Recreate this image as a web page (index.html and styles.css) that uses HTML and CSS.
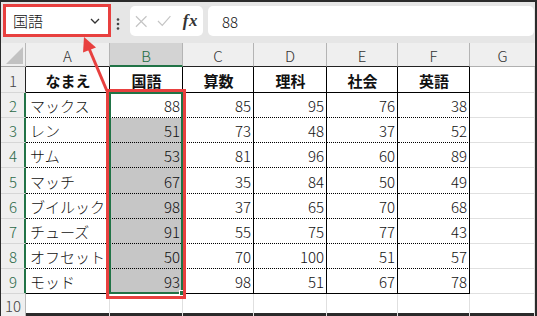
FILE: index.html
```html
<!DOCTYPE html>
<html lang="ja">
<head>
<meta charset="utf-8">
<link rel="stylesheet" href="styles.css">
</head>
<body>
<div class="frame">
  <div class="fbar">
    <div class="namebox">
      <span class="nb-text">国語</span>
      <svg class="chev" width="10" height="6" viewBox="0 0 10 6"><polyline points="1,1 5,5 9,1" fill="none" stroke="#333" stroke-width="1.3"/></svg>
    </div>
    <svg class="vdots" width="4" height="12" viewBox="0 0 4 12"><circle cx="2" cy="1.5" r="1.3" fill="#444"/><circle cx="2" cy="6" r="1.3" fill="#444"/><circle cx="2" cy="10.5" r="1.3" fill="#444"/></svg>
    <div class="fbtns">
      <svg width="13" height="13" viewBox="0 0 13 13"><path d="M1 1 L12 12 M12 1 L1 12" stroke="#c4c4c4" stroke-width="1.2" fill="none"/></svg>
      <svg width="15" height="12" viewBox="0 0 15 12"><polyline points="1,6 5.5,10.5 14,1" stroke="#c4c4c4" stroke-width="1.2" fill="none"/></svg>
      <span class="fx">fx</span>
    </div>
    <div class="finput">88</div>
  </div>
  <div class="grid">
    <div class="corner"><span class="tri"></span></div>
    <div class="ch">A</div><div class="ch chsel">B</div><div class="ch">C</div><div class="ch">D</div><div class="ch">E</div><div class="ch">F</div><div class="ch chg">G</div>

    <div class="rh rh1">1</div>
    <div class="c t top hd">なまえ</div><div class="c t top hd">国語</div><div class="c t top hd">算数</div><div class="c t top hd">理科</div><div class="c t top hd">社会</div><div class="c t top hd">英語</div><div class="c"></div>

    <div class="rh rs">2</div>
    <div class="c t dot nm">マックス</div><div class="c t dot num">88</div><div class="c t dot num">85</div><div class="c t dot num">95</div><div class="c t dot num">76</div><div class="c t dot num">38</div><div class="c"></div>

    <div class="rh rs">3</div>
    <div class="c t dot nm">レン</div><div class="c t dot num sel">51</div><div class="c t dot num">73</div><div class="c t dot num">48</div><div class="c t dot num">37</div><div class="c t dot num">52</div><div class="c"></div>

    <div class="rh rs">4</div>
    <div class="c t dot nm">サム</div><div class="c t dot num sel">53</div><div class="c t dot num">81</div><div class="c t dot num">96</div><div class="c t dot num">60</div><div class="c t dot num">89</div><div class="c"></div>

    <div class="rh rs">5</div>
    <div class="c t dot nm">マッチ</div><div class="c t dot num sel">67</div><div class="c t dot num">35</div><div class="c t dot num">84</div><div class="c t dot num">50</div><div class="c t dot num">49</div><div class="c"></div>

    <div class="rh rs">6</div>
    <div class="c t dot nm">ブイルック</div><div class="c t dot num sel">98</div><div class="c t dot num">37</div><div class="c t dot num">65</div><div class="c t dot num">70</div><div class="c t dot num">68</div><div class="c"></div>

    <div class="rh rs">7</div>
    <div class="c t dot nm">チューズ</div><div class="c t dot num sel">91</div><div class="c t dot num">55</div><div class="c t dot num">75</div><div class="c t dot num">77</div><div class="c t dot num">43</div><div class="c"></div>

    <div class="rh rs">8</div>
    <div class="c t dot nm">オフセット</div><div class="c t dot num sel">50</div><div class="c t dot num">70</div><div class="c t dot num">100</div><div class="c t dot num">51</div><div class="c t dot num">57</div><div class="c"></div>

    <div class="rh rs">9</div>
    <div class="c t top nm">モッド</div><div class="c t top num sel">93</div><div class="c t top num">98</div><div class="c t top num">51</div><div class="c t top num">67</div><div class="c t top num">78</div><div class="c"></div>

    <div class="rh rh10">10</div>
    <div class="c"></div><div class="c"></div><div class="c"></div><div class="c"></div><div class="c"></div><div class="c"></div><div class="c"></div>
  </div>
</div>

<div class="selbox"><span class="handle"></span></div>
<div class="mark mark-cells"></div>
<svg class="arrow" width="537" height="316" viewBox="0 0 537 316">
  <line x1="107" y1="91" x2="88" y2="46" stroke="#e8403f" stroke-width="3"/>
  <polygon points="84,37 96,47.5 83,52.5" fill="#e8403f"/>
</svg>
</body>
</html>
```

FILE: styles.css
```css
* { box-sizing: border-box; }
html, body { margin: 0; padding: 0; }
body {
  position: relative;
  width: 537px;
  height: 316px;
  font-family: "Noto Sans CJK JP", "Noto Sans", sans-serif;
  font-weight: 300;
  color: #111;
  overflow: hidden;
}
.frame {
  width: 537px;
  height: 316px;
  border-style: solid;
  border-color: #2b2b2b;
  border-width: 2px 2px 3px 1px;
  display: flex;
  flex-direction: column;
  background: #fff;
}
.fbar {
  height: 41px;
  background: #e6e6e6;
  display: flex;
  align-items: flex-start;
  padding: 2px 1px 0 2px;
  flex: none;
}
.namebox {
  width: 108px;
  height: 33px;
  border: 3px solid #e8403f;
  background: #fff;
  display: flex;
  align-items: center;
  justify-content: space-between;
  padding: 0 8px 0 7px;
}
.nb-text { font-size: 15px; line-height: 1; color: #111; }
.chev { margin-top: 1px; }
.vdots { margin: 14px 0 0 5px; }
.fbtns {
  margin: 2px 0 0 10px;
  width: 73px;
  height: 30px;
  background: #fff;
  border-radius: 5px;
  display: flex;
  align-items: center;
  padding: 0 5px 0 5px;
  gap: 10px;
}
.fx {
  font-family: "Liberation Serif", serif;
  font-style: italic;
  font-weight: bold;
  font-size: 17px;
  color: #333;
  letter-spacing: 0.5px;
  margin-left: 1px;
}
.finput {
  margin: 2px 0 0 5px;
  flex: 1;
  height: 30px;
  background: #fff;
  border-radius: 5px;
  font-size: 15px;
  display: flex;
  align-items: center;
  padding-left: 14px;
  color: #111;
}
.grid {
  flex: 1;
  display: grid;
  grid-template-columns: 25px 84px 73px 71px 73px 71px 72px 65px;
  grid-template-rows: 24px 26px 25px 25px 25px 26px 25px 25px 25px 25px 1fr;
  font-size: 15px;
}
.corner {
  background: #efefef;
  border-right: 1px solid #b8b8b8;
  border-bottom: 1px solid #a8a8a8;
  position: relative;
}
.tri {
  position: absolute;
  right: 2px;
  bottom: 2px;
  width: 0;
  height: 0;
  border-left: 17px solid transparent;
  border-bottom: 17px solid #c2c2c2;
}
.ch {
  background: #efefef;
  border-right: 1px solid #b4b4b4;
  border-bottom: 1px solid #222;
  display: flex;
  align-items: center;
  justify-content: center;
  color: #333;
  font-size: 15px;
  padding-top: 1px;
}
.chsel {
  background: #d3d3d3;
  color: #1d6b41;
  border-bottom: 2px solid #217346;
  padding-top: 2px;
}
.chg { border-bottom-color: #b0b0b0; border-right: none; }
.rh {
  background: #efefef;
  border-right: 1px solid #b8b8b8;
  border-bottom: 1px solid #d6d6d6;
  display: flex;
  align-items: center;
  justify-content: center;
  color: #444;
  font-size: 15px;
  padding-top: 1px;
}
.rh1 { border-right-color: #222; }
.rs {
  color: #2b6a48;
  border-right: 1px solid #217346;
  box-shadow: inset -1px 0 0 #217346;
}
.rh10 { align-items: flex-end; padding-bottom: 0; }
.c {
  border-right: 1px solid #e0e0e0;
  border-bottom: 1px solid #e0e0e0;
  display: flex;
  align-items: center;
  padding: 1px 2px 0 3px;
  white-space: nowrap;
}
.t { border-right: 1px solid #000; }
.dot { border-bottom: 1px dotted #000; }
.top { border-bottom: 1px solid #000; }
.hd { justify-content: center; font-weight: bold; }
.nm { justify-content: flex-start; padding-left: 4px; }
.num { justify-content: flex-end; }
.sel { background: #c6c6c6; }

.selbox {
  position: absolute;
  left: 109px;
  top: 92px;
  width: 74px;
  height: 202px;
  border: 2px solid #217346;
  pointer-events: none;
}
.handle {
  position: absolute;
  right: -4px;
  bottom: -4px;
  width: 6px;
  height: 6px;
  background: #217346;
  border: 1px solid #fff;
}
.mark {
  position: absolute;
  border: 3px solid #e8403f;
  pointer-events: none;
}
.mark-cells {
  left: 106px;
  top: 89px;
  width: 80px;
  height: 210px;
}
.arrow {
  position: absolute;
  left: 0;
  top: 0;
  pointer-events: none;
}
```
